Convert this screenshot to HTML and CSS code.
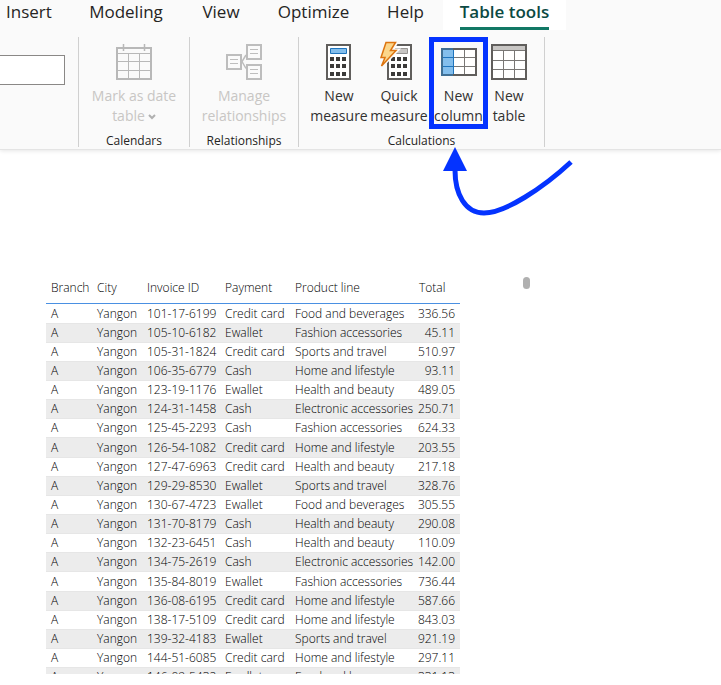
FILE: index.html
```html
<!DOCTYPE html>
<html lang="en">
<head>
    <meta charset="UTF-8">
    <meta name="viewport" content="width=device-width, initial-scale=1.0">
    <title>Table tools</title>
    <link rel="stylesheet" href="styles.css">
</head>
<body>
    <header class="header">
        <nav class="tabs">
            <a href="#" class="tab">Insert</a>
            <a href="#" class="tab">Modeling</a>
            <a href="#" class="tab">View</a>
            <a href="#" class="tab">Optimize</a>
            <a href="#" class="tab">Help</a>
            <a href="#" class="tab active"><span>Table tools</span></a>
        </nav>

        <div class="ribbon">
            <div class="group name-group">
                <input type="text" class="name-input" aria-label="Name">
            </div>

            <div class="group">
                <div class="group-buttons">
                    <button class="tool-btn" disabled>
                        <svg class="icon" viewBox="0 0 36 36" fill="none" stroke="#b8b8b8">
                            <path d="M1 4h34v31H1z" stroke-width="2"/>
                            <path d="M2 9.5h32M12.5 9v25M23.5 9v25M2 17.5h32M2 26.5h32"/>
                            <path d="M7.500 0v7M28.500 0v7" stroke-width="1.500"/>
                        </svg>
                        <span>Mark as date<br>table<svg class="chevron" viewBox="0 0 8 6" fill="none" stroke="#b0b0b0" stroke-width="2"><path d="M1 1l3 3 3-3"/></svg></span>
                    </button>
                </div>
                <p class="group-label">Calendars</p>
            </div>

            <div class="group">
                <div class="group-buttons">
                    <button class="tool-btn" disabled>
                        <svg class="icon" viewBox="0 0 36 36" fill="none" stroke="#bdbdbd">
                            <path d="M1 11h14v14H1zM21 1h14v14H21zM21 21h14v14H21z" stroke-width="2"/>
                            <path d="M20 11l-4 6.500 4 7" stroke-width="1.500"/>
                            <path d="M4 15.500h8M4 19.500h8M24 5.500h8M24 9.500h8M24 25.500h8M24 29.500h8"/>
                        </svg>
                        <span>Manage<br>relationships</span>
                    </button>
                </div>
                <p class="group-label">Relationships</p>
            </div>

            <div class="group">
                <div class="group-buttons calc-buttons">
                    <button class="tool-btn">
                        <svg class="icon" viewBox="0 0 36 36">
                            <path d="M6 1h23v34H6z" fill="#fff" stroke="#605e5c" stroke-width="2"/>
                            <path d="M9.500 4.500h16v5h-16z" fill="#83beec" stroke="#1e74bd"/>
                            <path d="M9 13h4v4H9zM15 13h4v4h-4zM21 13h4v4h-4zM9 20h4v4H9zM15 20h4v4h-4zM21 20h4v4h-4zM9 28h4v4H9zM15 28h4v4h-4zM21 28h4v4h-4z" fill="#3b3a39"/>
                        </svg>
                        <span>New<br>measure</span>
                    </button>
                    <button class="tool-btn">
                        <svg class="icon" viewBox="0 0 36 36">
                            <path d="M7 1h23v34H7z" fill="#fff" stroke="#605e5c" stroke-width="2"/>
                            <path d="M10.500 4.500h16v5h-16z" fill="#c8c6c4" stroke="#979593"/>
                            <path d="M10 13h4v4h-4zM16 13h4v4h-4zM22 13h4v4h-4zM10 20h4v4h-4zM16 20h4v4h-4zM22 20h4v4h-4zM10 28h4v4h-4zM16 28h4v4h-4zM22 28h4v4h-4z" fill="#3b3a39"/>
                            <path d="M5 -1.500h10l-4.500 8h5L0 22.500l3.500-9H0z" fill="#fafafa" stroke="#fafafa" stroke-width="4"/>
                            <path d="M5 -1.500h9.500l-5 8h5.500L.5 22l3.500-8.500H0z" fill="#fbd68b" stroke="#dd7410" stroke-width="1.500"/>
                        </svg>
                        <span>Quick<br>measure</span>
                    </button>
                    <button class="tool-btn highlighted">
                        <svg class="icon" viewBox="0 0 36 36">
                            <path d="M1 5h34v26H1z" fill="#fff"/>
                            <path d="M1 5h12v26H1z" fill="#83beec"/>
                            <path d="M13 13.500h22M13 22.500h22M23.500 5v26" fill="none" stroke="#797775"/>
                            <path d="M1 13.500h12M1 22.500h12M12.500 5v26" fill="none" stroke="#1e74bd"/>
                            <path d="M1 5h34v26H1z" fill="none" stroke="#605e5c" stroke-width="2"/>
                            <path d="M12 5H1v26h11" fill="none" stroke="#3f6f94" stroke-width="2"/>
                        </svg>
                        <span>New<br>column</span>
                        <svg class="arrow" viewBox="0 0 136 76" fill="none">
                            <path d="M16 24C16 48 26 67 45 67C66 67 104 42 132 16" stroke="#0433ff" stroke-width="5"/>
                            <path d="M16 1l12 24H4z" fill="#0433ff"/>
                        </svg>
                    </button>
                    <button class="tool-btn">
                        <svg class="icon" viewBox="0 0 36 36">
                            <path d="M1 1h34v34H1z" fill="#fff"/>
                            <path d="M1 1h34v5H1z" fill="#c8c6c4"/>
                            <path d="M1 6.500h34M12.500 6v29M23.500 6v29M1 16.500h34M1 25.500h34" fill="none" stroke="#797775"/>
                            <path d="M1 1h34v34H1z" fill="none" stroke="#605e5c" stroke-width="2"/>
                        </svg>
                        <span>New<br>table</span>
                    </button>
                </div>
                <p class="group-label">Calculations</p>
            </div>
        </div>
    </header>

    <main class="canvas">
        <div class="table-view">
            <table class="sales-table">
                <colgroup>
                    <col class="col-branch">
                    <col class="col-city">
                    <col class="col-invoice">
                    <col class="col-payment">
                    <col class="col-product">
                    <col class="col-total">
                </colgroup>
                <thead>
                    <tr><th>Branch</th><th>City</th><th>Invoice ID</th><th>Payment</th><th>Product line</th><th>Total</th></tr>
                </thead>
                <tbody id="salesRows">
                    <!-- Rows are added here by the script below -->
                </tbody>
            </table>
        </div>
        <div class="scroll-thumb"></div>
    </main>

    <script>
        const sales = [
            ['101-17-6199', 'Credit card', 'Food and beverages', '336.56'],
            ['105-10-6182', 'Ewallet', 'Fashion accessories', '45.11'],
            ['105-31-1824', 'Credit card', 'Sports and travel', '510.97'],
            ['106-35-6779', 'Cash', 'Home and lifestyle', '93.11'],
            ['123-19-1176', 'Ewallet', 'Health and beauty', '489.05'],
            ['124-31-1458', 'Cash', 'Electronic accessories', '250.71'],
            ['125-45-2293', 'Cash', 'Fashion accessories', '624.33'],
            ['126-54-1082', 'Credit card', 'Home and lifestyle', '203.55'],
            ['127-47-6963', 'Credit card', 'Health and beauty', '217.18'],
            ['129-29-8530', 'Ewallet', 'Sports and travel', '328.76'],
            ['130-67-4723', 'Ewallet', 'Food and beverages', '305.55'],
            ['131-70-8179', 'Cash', 'Health and beauty', '290.08'],
            ['132-23-6451', 'Cash', 'Health and beauty', '110.09'],
            ['134-75-2619', 'Cash', 'Electronic accessories', '142.00'],
            ['135-84-8019', 'Ewallet', 'Fashion accessories', '736.44'],
            ['136-08-6195', 'Credit card', 'Home and lifestyle', '587.66'],
            ['138-17-5109', 'Credit card', 'Home and lifestyle', '843.03'],
            ['139-32-4183', 'Ewallet', 'Sports and travel', '921.19'],
            ['144-51-6085', 'Credit card', 'Home and lifestyle', '297.11'],
            ['146-09-5432', 'Ewallet', 'Food and beverages', '331.13']
        ];

        const salesRows = document.getElementById('salesRows');
        sales.forEach(sale => {
            const row = document.createElement('tr');
            ['A', 'Yangon', ...sale].forEach(value => {
                const cell = document.createElement('td');
                cell.textContent = value;
                row.appendChild(cell);
            });
            salesRows.appendChild(row);
        });
    </script>
</body>
</html>
```
FILE: styles.css
```css
* {
    margin: 0;
    padding: 0;
    box-sizing: border-box;
}

:root {
    --ribbon: #fafafa;
    --line: #d0d0d0;
    --accent: #117865;
    --marker: #0433ff;
    --text: #252423;
}

body {
    display: flex;
    flex-direction: column;
    height: 100vh;
    overflow: hidden;
    background-color: white;
    color: var(--text);
    font-family: 'Segoe UI', 'Open Sans', 'Noto Sans', sans-serif;
}

.header {
    background-color: var(--ribbon);
    border-bottom: 1px solid #e4e4e4;
    box-shadow: 0 1px 4px rgba(0,0,0,0.1);
}

.tabs {
    display: grid;
    grid-template-columns: 69px 114px 76px 109px 75px 123px;
    height: 30px;
}

.tab {
    color: var(--text);
    font-size: 17px;
    line-height: 24px;
    text-align: center;
    text-decoration: none;
    white-space: nowrap;
}

.tab:first-child {
    padding-left: 6px;
    text-align: left;
}

.tab.active {
    background-color: white;
    color: #0c4a43;
    font-weight: 600;
}

.tab.active span {
    display: inline-block;
    height: 30px;
    border-bottom: 3px solid var(--accent);
}

.ribbon {
    display: grid;
    grid-template-columns: 79px 111px 109px 246px;
    padding: 7px 0 2px;
}

.group {
    display: flex;
    flex-direction: column;
    height: 110px;
    border-right: 1px solid var(--line);
}

.name-input {
    width: 65px;
    height: 30px;
    margin-top: 18px;
    border: 1px solid #8a8886;
    border-left: none;
    background-color: white;
}

.group-buttons {
    display: flex;
    flex: none;
    justify-content: center;
    height: 92px;
}

.calc-buttons {
    display: grid;
    grid-template-columns: 60px 60px 59px 42px;
    justify-content: start;
    padding-left: 10px;
}

.tool-btn {
    display: flex;
    flex-direction: column;
    align-items: center;
    gap: 6px;
    padding-top: 7px;
    border: none;
    background: none;
    color: #323130;
    font-family: inherit;
    font-size: 14px;
    line-height: 20px;
    white-space: nowrap;
}

.tool-btn:disabled {
    color: #c8c6c4;
}

.icon {
    width: 36px;
    height: 36px;
    flex: none;
    overflow: visible;
}

.chevron {
    width: 8px;
    height: 6px;
    margin-left: 3px;
    vertical-align: 1px;
}

.highlighted {
    position: relative;
}

.highlighted::after {
    content: '';
    position: absolute;
    inset: 0;
    border: 5px solid var(--marker);
}

/* Arrow points up at the highlighted button */
.arrow {
    position: absolute;
    top: 109px;
    left: 10px;
    width: 136px;
    height: 76px;
    z-index: 1;
}

.group-label {
    font-size: 12px;
    line-height: 24px;
    text-align: center;
}

.canvas {
    display: flex;
    align-items: flex-start;
    gap: 63px;
    flex: 1;
    min-height: 0;
    padding: 123px 46px 11px;
}

.table-view {
    height: 100%;
    overflow: hidden;
}

.sales-table {
    width: 414px;
    table-layout: fixed;
    border-collapse: separate;
    border-spacing: 0;
    font-size: 12px;
    font-weight: 300;
    line-height: 18px;
    color: #000;
    white-space: nowrap;
}

.col-branch, .col-total {
    width: 46px;
}

.col-city {
    width: 50px;
}

.col-invoice {
    width: 78px;
}

.col-payment {
    width: 70px;
}

.col-product {
    width: 124px;
}

.sales-table th {
    height: 31px;
    padding: 0 0 0 5px;
    border-bottom: 1px solid #4a90e2;
    font-weight: inherit;
    text-align: left;
}

.sales-table td {
    height: 19px;
    padding: 0 0 0 5px;
    border-bottom: 1px solid #e6e6e6;
}

.sales-table td:last-child {
    padding: 0 5px 0 0;
    text-align: right;
}

.sales-table tr:nth-child(7n+1) td {
    height: 20px;
}

.sales-table tbody tr:nth-child(even) {
    background-color: #ececec;
}

.scroll-thumb {
    width: 7px;
    height: 12px;
    margin-top: 4px;
    border-radius: 4px;
    background-color: #b0b0b0;
}
```
